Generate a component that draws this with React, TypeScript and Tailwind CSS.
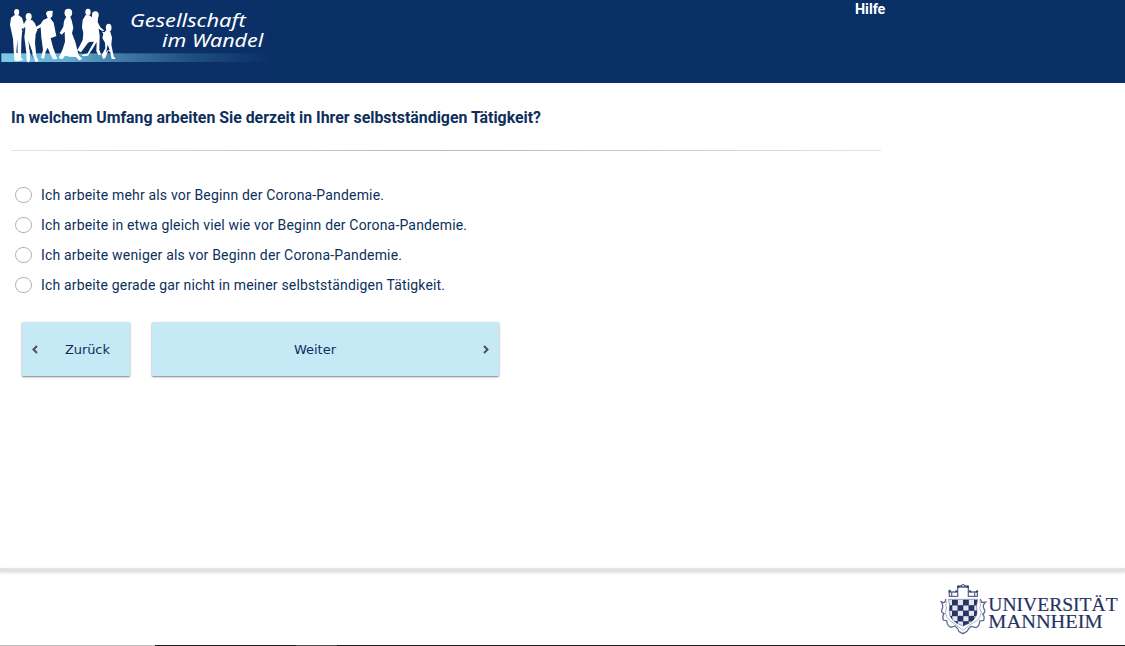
import React from "react";

const options = [
  "Ich arbeite mehr als vor Beginn der Corona-Pandemie.",
  "Ich arbeite in etwa gleich viel wie vor Beginn der Corona-Pandemie.",
  "Ich arbeite weniger als vor Beginn der Corona-Pandemie.",
  "Ich arbeite gerade gar nicht in meiner selbstständigen Tätigkeit.",
];
const optionWidths = [343, 426, 361, 404];

function StudyLogo() {
  return (
    <svg className="block h-[83px] w-[271px]" viewBox="0 0 813 249" role="img">
      <defs>
        <linearGradient id="band" x1="0" x2="1" y1="0" y2="0">
          <stop offset="0" stopColor="#7ccbe5" />
          <stop offset="0.25" stopColor="#62adcf" />
          <stop offset="0.45" stopColor="#3f7aa3" />
          <stop offset="0.7" stopColor="#1f5080" />
          <stop offset="1" stopColor="#0a3065" />
        </linearGradient>
      </defs>
      <rect width="813" height="216" fill="#0b3067" />
      <rect x="4" y="160" width="806" height="26" fill="url(#band)" />
      <g fill="#fff">
        <ellipse cx="50" cy="37" rx="7.500" ry="10" />
        <path d="M44 45 L33 53 L30 74 L35 98 L39 116 L43 181 L50 184 L70 180 L63 173 L64 125 L66 98 L74 80 L66 53 L56 46 Z" />
        <ellipse cx="86" cy="50" rx="9" ry="11" />
        <path d="M79 59 L70 75 L61 79 L62 84 L76 82 L75 95 L73 111 L79 158 L80 182 L85 188 L90 181 L89 134 L96 154 L106 185 L116 184 L109 169 L105 128 L107 102 L112 91 L105 70 L97 61 Z" />
        <path d="M138 41 Q139 32 149 32 L159 33 L158 37 L157 49 L151 55 L161 68 L169 108 L152 115 L160 145 L172 177 L159 178 L151 163 L143 143 L137 155 L132 176 L123 173 L129 149 L124 112 L122 82 L108 90 L106 82 L122 72 L130 60 L143 54 Z" />
        <ellipse cx="205" cy="39" rx="11.500" ry="12.500" />
        <path d="M200 48 L192 63 L190 80 L179 99 L185 104 L194 95 L195 125 L188 148 L176 174 L187 178 L195 167 L209 170 L228 171 L237 181 L247 177 L236 166 L226 126 L216 100 L220 83 L215 61 L210 49 Z" />
        <ellipse cx="264" cy="36" rx="8" ry="10" />
        <path d="M257 45 L248 60 L246 82 L250 100 L248 120 L237 142 L231 151 L243 157 L263 130 L268 126 L282 125 L271 145 L262 161 L244 164 L249 169 L264 167 L278 146 L290 126 L289 154 L296 166 L303 164 L298 149 L299 107 L296 86 L307 93 L313 92 L301 82 L293 66 L295 45 L290 35 L280 38 L276 52 L268 46 Z" />
        <ellipse cx="286" cy="45" rx="10" ry="11" />
        <ellipse cx="326" cy="83" rx="8.500" ry="12" />
        <path d="M319 91 L313 97 L306 95 L310 102 L307 114 L315 128 L316 145 L305 166 L310 177 L316 174 L325 151 L331 157 L335 177 L347 177 L341 169 L334 134 L336 113 L331 95 Z" />
      </g>
      <g fill="#0b3067">
        <path d="M52 118 L53 160 L49 158 Z M85 121 L94 150 L98 177 L88 146 Z M267 129 L276 130 L261 147 L249 163 L244 159 Z M323 134 L329 149 L323 151 L318 158 Z M65 86 L72 84 L67 95 Z M300 95 L307 99 L305 106 Z" />
      </g>
      <g fill="#fff" fontFamily="'Noto Sans', 'Open Sans', sans-serif" fontStyle="italic" fontSize="54">
        <text x="390" y="80" textLength="347" lengthAdjust="spacingAndGlyphs">Gesellschaft</text>
        <text x="486" y="141" textLength="304" lengthAdjust="spacingAndGlyphs">im Wandel</text>
      </g>
    </svg>
  );
}

const cells: [number, number][] = [];
for (let r = 0; r < 5; r++) {
  for (let c = 0; c < 6; c++) {
    if ((r + c) % 2 === 1) cells.push([c, r]);
  }
}

function UniversityLogo() {
  return (
    <svg className="block h-[56px] w-[185px]" viewBox="0 0 555 168" role="img">
      <defs>
        <clipPath id="shield">
          <path d="M25 46 H113 Q107 64 111 82 Q112 111 69 126 Q27 111 28 82 Q32 64 25 46 Z" />
        </clipPath>
      </defs>
      <g fill="none" stroke="#5c6891" strokeWidth="3.800">
        <path d="M28 23 V37 H53 V10 Q69 -2 85 10 V37 H112 V23 M25 24 H49 M89 24 H113 M53 9 H85 M35 24 V36 M104 24 V36" />
        <path d="M17 45 Q18 55 9 56 L2 52 Q12 64 6 76 Q1 84 12 89 Q6 99 10 108 L20 110 Q21 126 34 130 L45 126 Q54 132 57 143 L69 149 L81 142 Q86 132 94 127 L108 131 Q119 126 119 111 L131 109 Q135 98 128 90 Q139 84 132 75 Q126 63 137 54 L125 55 L121 45" />
        <path d="M20 52 Q14 63 20 72 Q12 86 20 98 Q32 115 43 119 L69 139 L95 119 Q113 112 120 98 Q128 84 119 73 Q125 60 119 50" stroke="#8790ac" strokeWidth="2" />
      </g>
      <g fill="#34416f">
        <circle cx="69" cy="5" r="5" />
        <circle cx="29" cy="21" r="3.500" />
        <circle cx="49" cy="22" r="3.500" />
        <circle cx="90" cy="22" r="3.500" />
        <circle cx="111" cy="22" r="3.500" />
        <circle cx="55" cy="8" r="4" />
        <circle cx="83" cy="8" r="4" />
      </g>
      <circle cx="69" cy="5" r="2.500" fill="#fff" />
      <path d="M25 46 H113 Q107 64 111 82 Q112 111 69 126 Q27 111 28 82 Q32 64 25 46 Z" fill="#e3e6f0" stroke="#6b7699" strokeWidth="2" />
      <g clipPath="url(#shield)" fill="#263363">
        {cells.map(([c, r]) => (
          <rect key={`${c}-${r}`} x={19.500 + c * 16.5} y={47.500 + r * 16} width="17.500" height="17" />
        ))}
      </g>
      <g fill="#263363" stroke="#263363" strokeWidth="0.500" fontFamily="'Liberation Serif', serif" fontSize="54">
        <text x="145" y="82" textLength="388" lengthAdjust="spacingAndGlyphs">UNIVERSITÄT</text>
        <text x="145" y="131.500" textLength="343" lengthAdjust="spacingAndGlyphs">MANNHEIM</text>
      </g>
    </svg>
  );
}

function Chevron({ flip = false }: { flip?: boolean }) {
  return (
    <svg className={flip ? "block h-[9px] w-[6px] rotate-180" : "block h-[9px] w-[6px]"} viewBox="0 0 6 9">
      <path d="M5 1 L1.500 4.500 L5 8" fill="none" stroke="#4c5358" strokeWidth="2" />
    </svg>
  );
}

export default function App() {
  return (
    <div className="flex h-[646px] w-[1125px] flex-col overflow-hidden bg-white font-[Roboto,sans-serif] text-[#0e2f5c]">
      <header className="flex h-[83px] shrink-0 items-start bg-[#083064]">
        <StudyLogo />
        <a className="ml-[584px] text-[14.300px] leading-[18px] font-bold text-white">Hilfe</a>
      </header>
      <main className="h-[485px] shrink-0 pl-[11px]">
        <h1 className="pt-[23px] text-[16px] leading-[24px] font-bold">
          <svg className="block h-6 w-[540px]" fill="currentColor">
            <text x="0" y="17" textLength="530" lengthAdjust="spacingAndGlyphs" className="text-[16px] font-bold">In welchem Umfang arbeiten Sie derzeit in Ihrer selbstständigen Tätigkeit?</text>
          </svg>
        </h1>
        <div className="mt-5 h-px w-[870px] bg-linear-to-r from-[#e4e4e4] via-[#b8b8b8] to-[#e4e4e4]" />
        <div className="mt-[29px] flex flex-col">
          {options.map((label, i) => (
            <label key={label} className="flex h-[30px] items-center pl-1">
              <span className="h-[16px] w-[17px] rounded-full border border-[#b3b3b3] bg-white" />
              <svg className="ml-[9px] block h-5 w-[440px]" fill="currentColor">
                <text x="0" y="15" textLength={optionWidths[i]} lengthAdjust="spacing" className="text-[14px]">{label}</text>
              </svg>
            </label>
          ))}
        </div>
        <div className="mt-[22px] ml-[11px] flex gap-[22px] font-['DejaVu_Sans',sans-serif] text-[13px]">
          <button className="flex h-[54px] w-[108px] items-center rounded-[1px] bg-[#c5e9f5] pl-[10px] shadow-[0_1px_2px_rgba(0,0,0,0.5)]">
            <Chevron />
            <span className="ml-[27px] pt-[2px] tracking-[-0.1px]">Zurück</span>
          </button>
          <button className="flex h-[54px] w-[347px] items-center rounded-[1px] bg-[#c5e9f5] pr-[10px] shadow-[0_1px_2px_rgba(0,0,0,0.5)]">
            <span className="flex-1 pt-[2px] pr-[5px] text-center">Weiter</span>
            <Chevron flip />
          </button>
        </div>
      </main>
      <footer className="flex h-[77px] shrink-0 flex-col">
        <div className="h-1 shrink-0 bg-[#e2e2e2] shadow-[0_1px_3px_rgba(0,0,0,0.12)]" />
        <div className="flex h-[73px] items-start justify-end pt-[12px]">
          <UniversityLogo />
        </div>
      </footer>
      <div className="flex h-px shrink-0 bg-[#1c1c1c]">
        <div className="w-[155px] bg-[#c0c0c0]" />
        <div className="w-[141px]" />
        <div className="w-[41px] bg-[#505050]" />
      </div>
    </div>
  );
}
